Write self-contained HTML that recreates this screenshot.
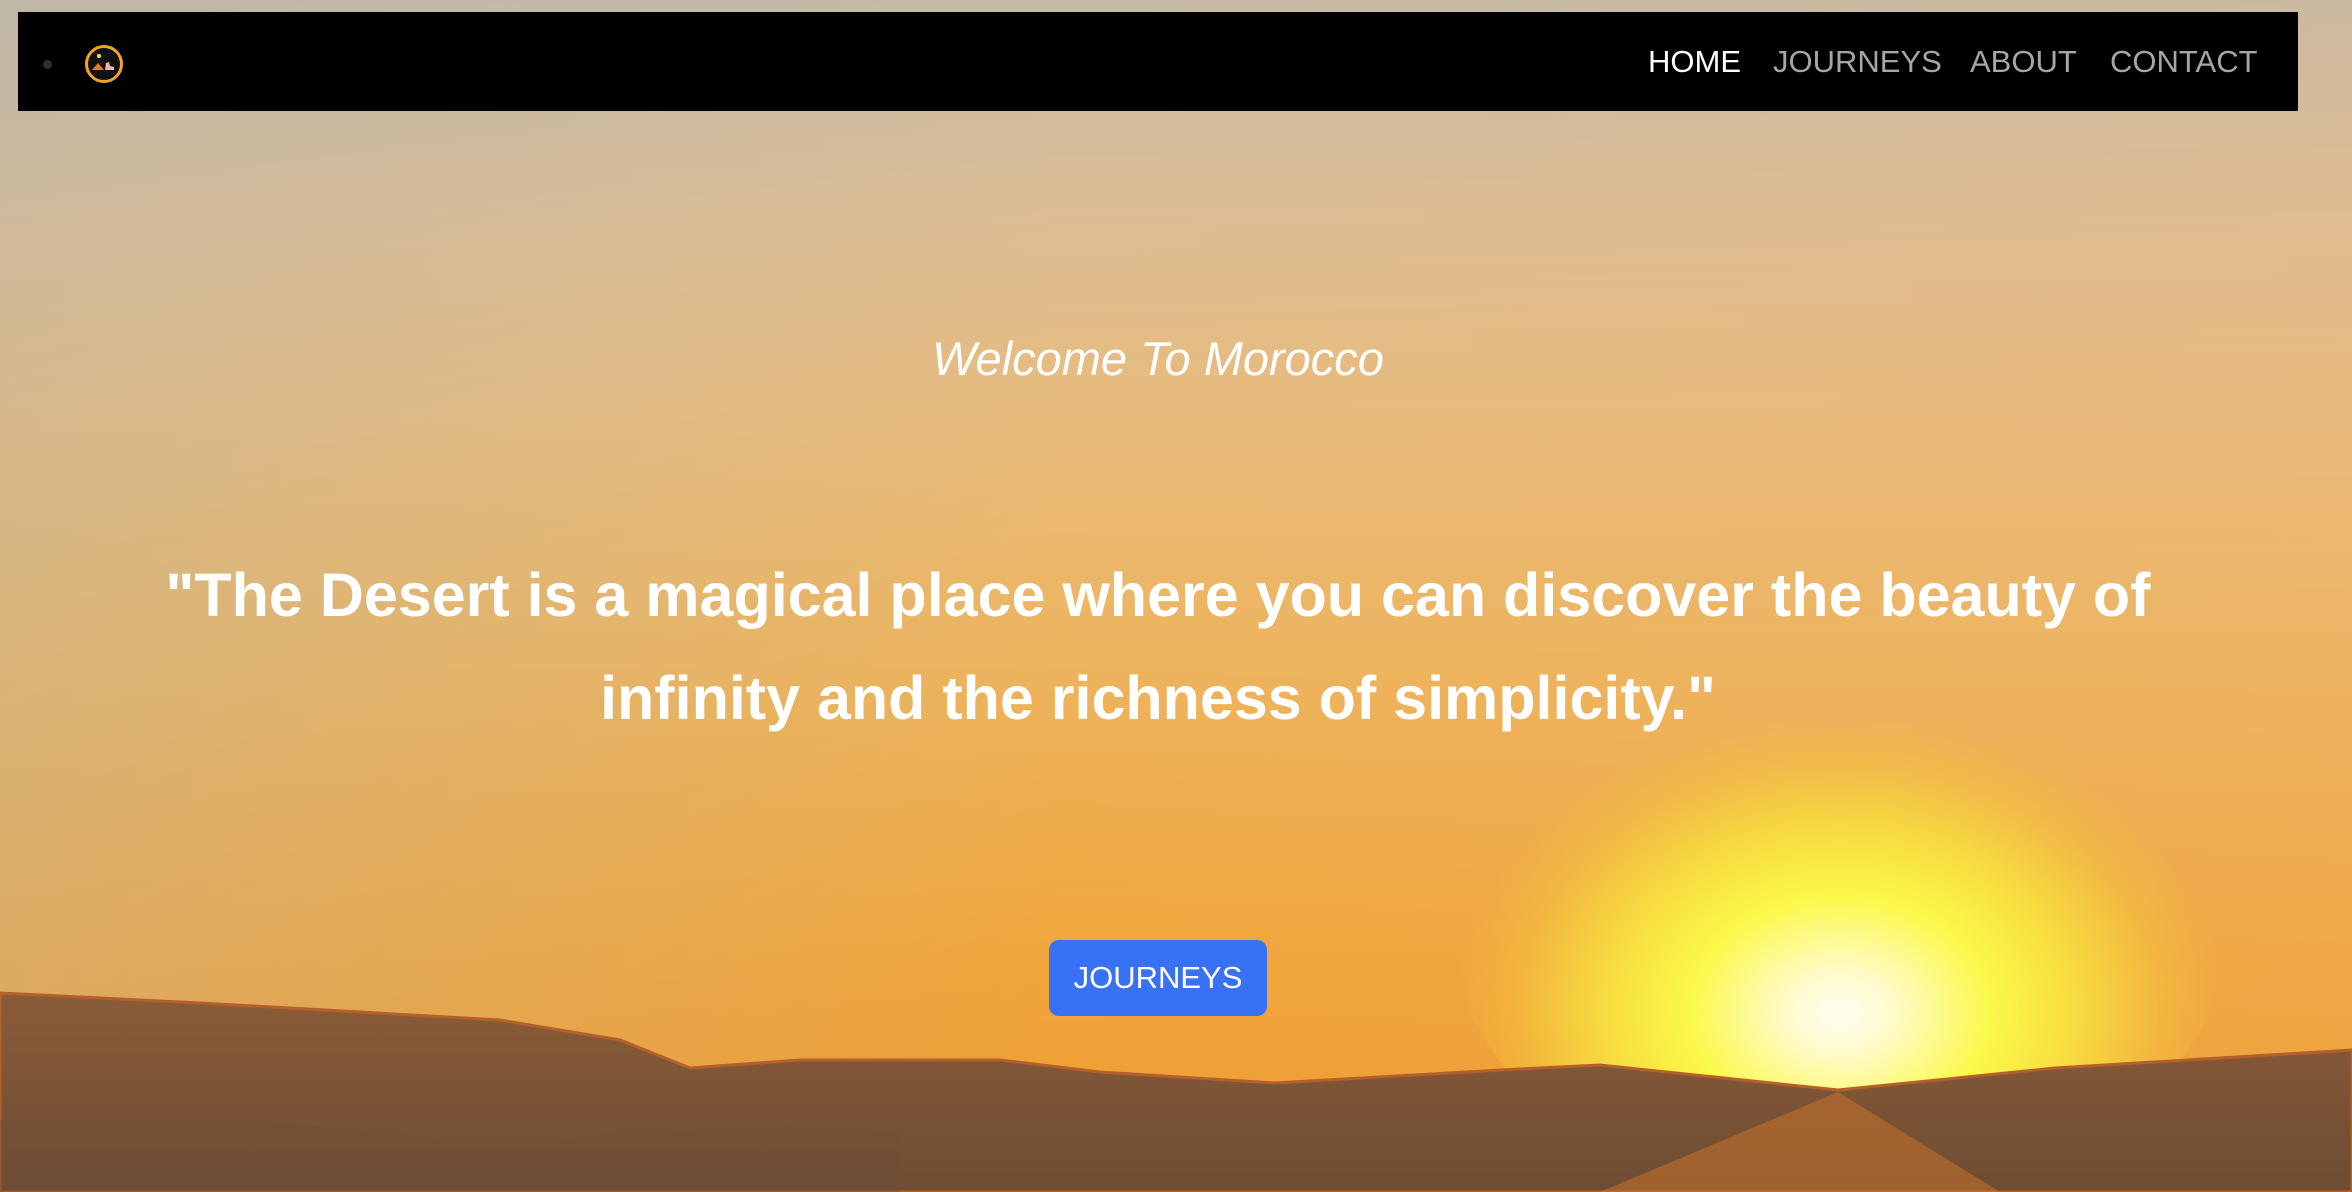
<!DOCTYPE html>
<html><head><meta charset="utf-8"><style>
*{margin:0;padding:0;box-sizing:border-box}
html,body{width:2352px;height:1192px;overflow:hidden}
body{position:relative;font-family:"Liberation Sans",sans-serif;
background:linear-gradient(180deg,#c4baa6 0%,#dcbd94 18%,#e8bb7c 35%,#edb45e 55%,#f0a63c 80%,#ee9a30 100%);}
.tint{position:absolute;inset:0;background:linear-gradient(90deg,rgba(180,180,170,.35) 0%,rgba(200,180,150,0) 45%,rgba(240,180,130,.15) 100%)}
.sun{position:absolute;left:1460px;top:720px;width:760px;height:472px;border-radius:50%;
background:radial-gradient(ellipse at 50% 62%,#fffef0 0%,#fffbd0 9%,#fbf84a 28%,#f8e040 42%,rgba(245,200,60,.45) 60%,rgba(240,170,50,0) 72%)}
svg.d{position:absolute;left:0;top:0}
nav{position:absolute;left:18px;top:12px;width:2280px;height:99px;background:#000}
.dot{position:absolute;left:25px;top:48px;width:9px;height:9px;border-radius:50%;background:#2b2f36}
.logo{position:absolute;left:67px;top:33px;width:38px;height:38px;border-radius:50%;border:3px solid #f3a42a;background:#111}
.links{position:absolute;top:32px;left:0;font-size:31px;color:#a6a6a6}
.links span{position:absolute;white-space:nowrap}
h2{position:absolute;left:0;width:2316px;top:331px;text-align:center;font-style:italic;font-weight:normal;font-size:47px;color:#fff}
h1{position:absolute;left:120px;width:2076px;top:544px;text-align:center;font-weight:bold;font-size:61px;line-height:103px;color:#fff}
.btn{position:absolute;left:1049px;top:940px;width:218px;height:76px;border-radius:10px;background:#3871f3;color:#fff;font-size:31px;text-align:center;line-height:76px}
</style></head><body>
<div class="tint"></div>
<div class="sun"></div>
<svg class="d" width="2352" height="1192">
<defs><linearGradient id="g" x1="0" y1="0" x2="0" y2="1"><stop offset="0" stop-color="#8a5c38"/><stop offset="1" stop-color="#6e4c33"/></linearGradient></defs>
<path d="M0 993 L200 1003 L500 1020 L620 1040 L690 1068 L800 1060 L1000 1060 L1100 1072 L1275 1083 L1500 1070 L1600 1065 L1838 1090 L2055 1068 L2352 1050 L2352 1192 L0 1192Z" fill="url(#g)" stroke="#b5602a" stroke-width="3"/>
<path d="M1600 1192 L1838 1092 L2000 1192Z" fill="#d0752a" opacity=".5"/>
<path d="M0 1120 Q300 1110 500 1150 Q650 1120 900 1130 L900 1192 L0 1192Z" fill="#6f5038" opacity=".4"/>
</svg>
<nav>
<div class="dot"></div>
<div class="logo"><svg width="32" height="32" viewBox="0 0 32 32"><circle cx="11" cy="8" r="2" fill="#ffe15a"/><path d="M4 22 L10 15 L16 22Z" fill="#e27a2a"/><path d="M17 22 L18 15 L21 14 L22 18 L26 19 L26 22Z" fill="#f2b2b2"/></svg></div>
<div class="links">
<span style="left:1630px;color:#fff">HOME</span>
<span style="left:1755px">JOURNEYS</span>
<span style="left:1952px">ABOUT</span>
<span style="left:2092px">CONTACT</span>
</div>
</nav>
<h2>Welcome To Morocco</h2>
<h1>"The Desert is a magical place where you can discover the beauty of infinity and the richness of simplicity."</h1>
<div class="btn">JOURNEYS</div>
</body></html>
